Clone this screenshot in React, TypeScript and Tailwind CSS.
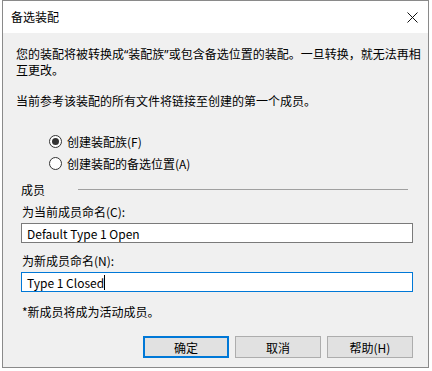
import React from 'react'

const font = { fontFamily: '"Noto Sans CJK SC", "Noto Sans", sans-serif' }
const latin = { fontFamily: '"Noto Sans", sans-serif' }

export default function App() {
  return (
    <div className="w-[432px] h-[371px] bg-white text-black" style={font}>
      <div className="ml-[2px] w-[427px] h-[368px] border border-[#8a8a8a] flex flex-col bg-[#f0f0f0]">
        {/* title bar */}
        <div className="h-[32px] bg-white flex items-center justify-between pl-[8px] pr-[10px] shrink-0">
          <span className="text-[12px]">备选装配</span>
          <svg width="11" height="11" viewBox="0 0 11 11" className="mt-[1px]">
            <path d="M0.5 0.5 L10.5 10.5 M10.5 0.5 L0.5 10.5" stroke="#111" strokeWidth="1" />
          </svg>
        </div>

        {/* body */}
        <div className="flex flex-col px-[13px] pt-[13px] text-[12px] leading-[15px]">
          <p className="whitespace-nowrap">
            您的装配将被转换成<span style={latin}>“</span>装配族<span style={latin}>”</span>或包含备选位置的装配。一旦转换，就无法再相
            <br />
            互更改。
          </p>
          <p className="mt-[16px]">当前参考该装配的所有文件将链接至创建的第一个成员。</p>

          <div className="mt-[26px] ml-[33px] flex flex-col gap-[7px]">
            <label className="flex items-center gap-[5px]">
              <span className="w-[13px] h-[13px] rounded-full border border-[#333] bg-white flex items-center justify-center">
                <span className="w-[7px] h-[7px] rounded-full bg-[#333]" />
              </span>
              创建装配族(F)
            </label>
            <label className="flex items-center gap-[5px]">
              <span className="w-[13px] h-[13px] rounded-full border border-[#333] bg-white" />
              创建装配的备选位置(A)
            </label>
          </div>

          <div className="mt-[11px] ml-[5px] flex items-center">
            <span>成员</span>
            <div className="ml-[33px] w-[330px] h-px bg-[#a0a0a0]" />
          </div>

          <div className="mt-[7px] ml-[6px]">为当前成员命名(C):</div>
          <div className="mt-[4px] ml-[5px] w-[392px] h-[20px] bg-white border border-[#7a7a7a] flex items-center px-[5px]">
            Default Type 1 Open
          </div>

          <div className="mt-[10px] ml-[6px]">为新成员命名(N):</div>
          <div className="mt-[4px] ml-[5px] w-[392px] h-[20px] bg-white border border-[#0078d7] flex items-center px-[5px]">
            Type 1 Closed
            <span className="w-px h-[15px] bg-black" />
          </div>

          <div className="mt-[12px] ml-[6px]">*新成员将成为活动成员。</div>

          <div className="mt-[17px] flex justify-end gap-[6px] pr-[2px]">
            <button className="w-[86px] h-[22px] bg-[#e1e1e1] border-2 border-[#0078d7] text-[12px]">确定</button>
            <button className="w-[86px] h-[22px] bg-[#e1e1e1] border border-[#adadad] text-[12px]">取消</button>
            <button className="w-[86px] h-[22px] bg-[#e1e1e1] border border-[#adadad] text-[12px]">帮助(H)</button>
          </div>
        </div>
      </div>
    </div>
  )
}
